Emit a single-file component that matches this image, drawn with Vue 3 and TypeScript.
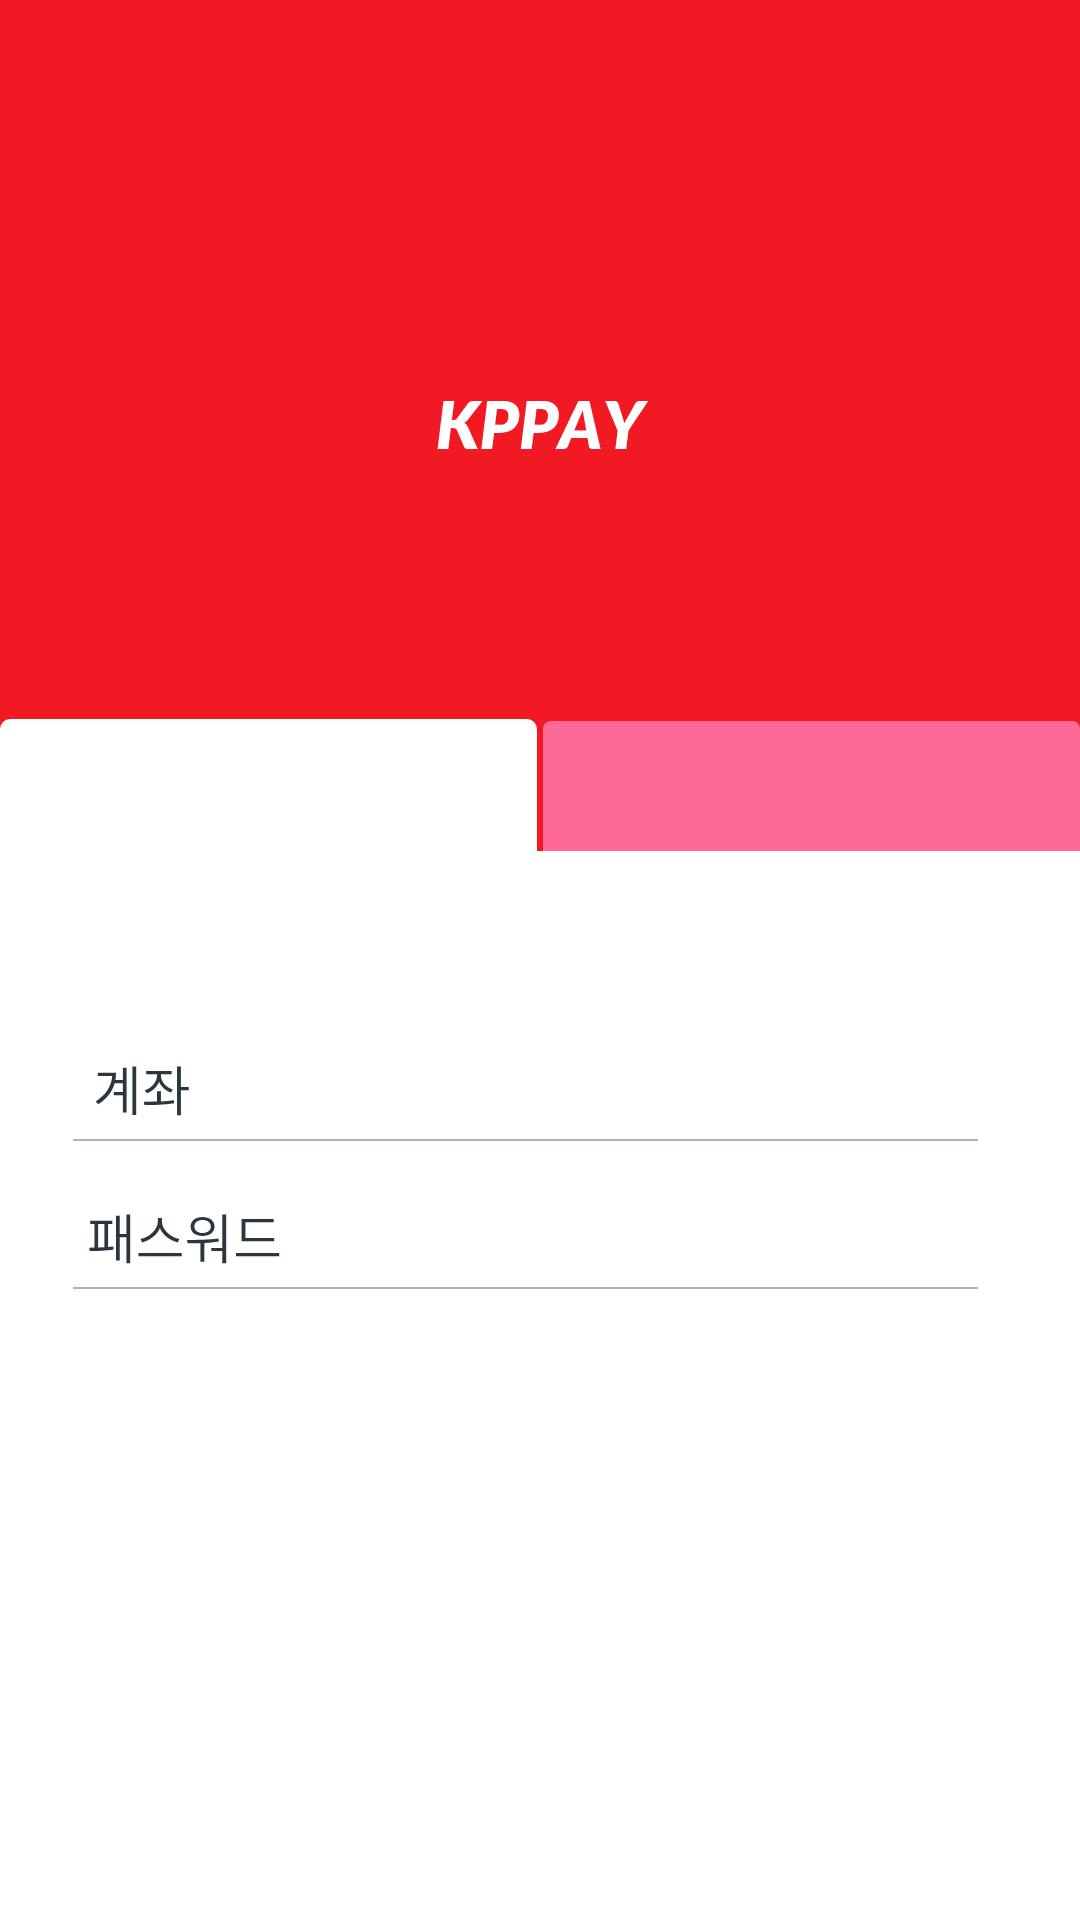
<script setup lang="ts">
import { ref } from 'vue'

type Tab = 'member' | 'guest'

const active = ref<Tab>('member')
const account = ref('')
const password = ref('')
</script>

<template>
  <main class="page">
    <header class="hero">
      <h1 class="brand">KPPAY</h1>
      <nav class="tabs">
        <button
          type="button"
          class="tab"
          :class="{ active: active === 'member' }"
          aria-label="로그인"
          @click="active = 'member'"
        ></button>
        <button
          type="button"
          class="tab"
          :class="{ active: active === 'guest' }"
          aria-label="회원가입"
          @click="active = 'guest'"
        ></button>
      </nav>
    </header>
    <form class="form" @submit.prevent>
      <input v-model="account" class="field account" type="text" placeholder="계좌" aria-label="계좌" />
      <input v-model="password" class="field password" type="password" placeholder="패스워드" aria-label="패스워드" />
    </form>
  </main>
</template>

<style>
body {
  background: #fff;
}
</style>

<style scoped>
.page {
  font-family: "Noto Sans CJK KR", sans-serif;
}

.hero {
  background: #f11a23;
  padding-top: 384px;
}

.brand {
  margin: 0 0 255px;
  color: #fff;
  font-family: Lato, "Noto Sans", sans-serif;
  font-size: 66px;
  font-style: italic;
  font-weight: 800;
  font-kerning: none;
  line-height: 80px;
  text-align: center;
}

.tabs {
  display: flex;
  align-items: flex-end;
  gap: 6px;
}

.tab {
  flex: 1;
  height: 130px;
  padding: 0;
  border: 0;
  border-radius: 8px 8px 0 0;
  background: #ff6997;
}

.tab.active {
  height: 132px;
  border-radius: 10px 10px 0 0;
  background: #fff;
}

.form {
  display: flex;
  flex-direction: column;
  gap: 48px;
  padding: 190px 102px 0 73px;
}

.field {
  box-sizing: border-box;
  width: 100%;
  height: 100px;
  padding: 0 14px 4px;
  border: 0;
  border-bottom: 2px solid #a5b7bb;
  outline: 0;
  background: transparent;
  color: #2b373e;
  font-family: inherit;
  font-size: 53px;
  font-weight: 350;
}

.account {
  padding-left: 20px;
}

.field::placeholder {
  color: #2b373e;
  opacity: 1;
}
</style>
